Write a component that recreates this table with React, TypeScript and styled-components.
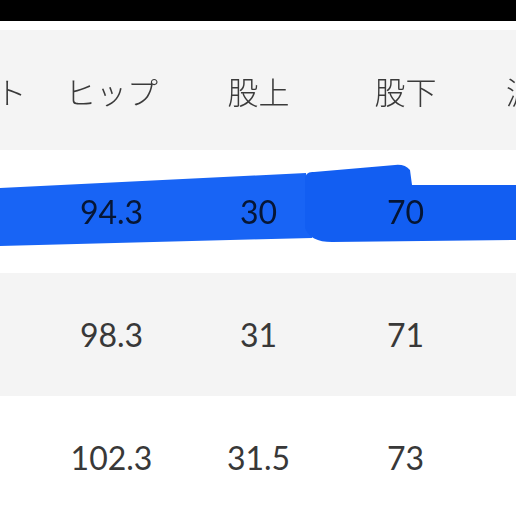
import styled, { createGlobalStyle } from 'styled-components';

const GlobalStyle = createGlobalStyle`
	html, body {
		margin: 0;
		padding: 0;
		background: #ffffff;
	}
	body {
		width: 516px;
		height: 516px;
		overflow: hidden;
		font-family: Lato, 'Noto Sans CJK JP', sans-serif;
		color: #383838;
	}
`;

const columns = ['ウエスト', 'ヒップ', '股上', '股下', '渡り幅'];

const rows = [
	['76', '94.3', '30', '70', '30'],
	['80', '98.3', '31', '71', '31'],
	['84', '102.3', '31.5', '73', '32'],
];

const Screen = styled.div`
	display: flex;
	flex-direction: column;
	width: 516px;
	height: 516px;
	overflow: hidden;
`;
const TopBar = styled.div`
	height: 21px;
	background: #000000;
	flex-shrink: 0;
`;
const Table = styled.div`
	display: flex;
	flex-direction: column;
	padding-top: 9px;
`;
const Row = styled.div<{ $shaded?: boolean; $height: number }>`
	position: relative;
	display: grid;
	grid-template-columns: repeat(5, 147px);
	margin-left: -109px;
	height: ${(p) => p.$height}px;
	align-items: center;
	background: ${(p) => (p.$shaded ? '#f4f4f4' : '#ffffff')};
`;
const HeadCell = styled.div`
	text-align: center;
	font-size: 31px;
	font-weight: 300;
	white-space: nowrap;
	color: #3a3a3a;
`;
const Cell = styled.div`
	text-align: center;
	font-size: 32px;
	white-space: nowrap;
	color: #383838;
`;
const Marker = styled.svg`
	position: absolute;
	left: 109px;
	top: 0;
	width: 516px;
	height: 123px;
	mix-blend-mode: multiply;
	filter: blur(0.7px);
	pointer-events: none;
`;

function Highlight() {
	return (
		<Marker viewBox='0 0 516 123'>
			<path d='M0,38 L306,23 L312,88 L0,96 Z' fill='#1864f5' />
			<path
				d='M314,22 Q305,21 305,30 L305,78 Q310,92 332,92 L516,90 L516,35 L412,35 L410,20 Q405,14 395,15 Z'
				fill='#125ef2'
			/>
		</Marker>
	);
}

export default function App() {
	return (
		<>
			<GlobalStyle />
			<Screen>
				<TopBar />
				<Table>
					<Row $shaded $height={120}>
						{columns.map((c) => (
							<HeadCell key={c}>{c}</HeadCell>
						))}
					</Row>
					{rows.map((r, i) => (
						<Row key={i} $shaded={i === 1} $height={123}>
							{r.map((v, j) => (
								<Cell key={j}>{v}</Cell>
							))}
							{i === 0 && <Highlight />}
						</Row>
					))}
				</Table>
			</Screen>
		</>
	);
}
